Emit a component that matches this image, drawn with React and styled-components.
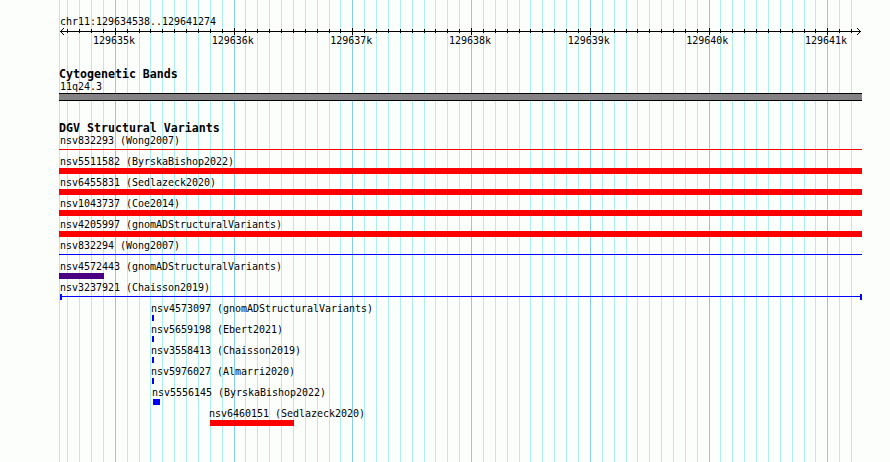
import React from "react";
import styled, { createGlobalStyle } from "styled-components";

const WIDTH = 890;
const HEIGHT = 462;
const LEFT = 59;

const colors = {
  paper: "#fcfefc",
  minor: "#afeeee",
  major: "#87ceeb",
  loss: "#ff0000",
  gain: "#0000ff",
  complex: "#4b0082",
  band: "#848284"
};

const majorTicks = [115, 234, 352, 471, 590, 709, 827];
const minorTicks = [
  67, 79, 91, 103,
  127, 139, 150, 162, 174, 186, 198, 210, 222,
  245, 257, 269, 281, 293, 305, 317, 329, 340,
  364, 376, 388, 400, 412, 424, 435, 447, 459,
  483, 495, 507, 519, 530, 542, 554, 566, 578,
  602, 614, 626, 637, 649, 661, 673, 685, 697,
  720, 732, 744, 756, 768, 780, 792, 804, 815,
  839, 851
];
const tickLabels = ["129635k", "129636k", "129637k", "129638k", "129639k", "129640k", "129641k"];

const variants = [
  { name: "nsv832293 (Wong2007)", type: "line", color: colors.loss },
  { name: "nsv5511582 (ByrskaBishop2022)", type: "bar", color: colors.loss },
  { name: "nsv6455831 (Sedlazeck2020)", type: "bar", color: colors.loss },
  { name: "nsv1043737 (Coe2014)", type: "bar", color: colors.loss },
  { name: "nsv4205997 (gnomADStructuralVariants)", type: "bar", color: colors.loss },
  { name: "nsv832294 (Wong2007)", type: "line", color: colors.gain },
  { name: "nsv4572443 (gnomADStructuralVariants)", type: "bar", color: colors.complex, width: 45 },
  { name: "nsv3237921 (Chaisson2019)", type: "span", color: colors.gain },
  { name: "nsv4573097 (gnomADStructuralVariants)", type: "bar", color: colors.gain, start: 93, width: 2, label: 92 },
  { name: "nsv5659198 (Ebert2021)", type: "bar", color: colors.gain, start: 93, width: 2, label: 92 },
  { name: "nsv3558413 (Chaisson2019)", type: "bar", color: colors.gain, start: 93, width: 2, label: 92 },
  { name: "nsv5976027 (Almarri2020)", type: "bar", color: colors.gain, start: 93, width: 2, label: 92 },
  { name: "nsv5556145 (ByrskaBishop2022)", type: "bar", color: colors.gain, start: 94, width: 7, label: 93 },
  { name: "nsv6460151 (Sedlazeck2020)", type: "bar", color: colors.loss, start: 151, width: 84, label: 150 }
];

const GlobalStyle = createGlobalStyle`
  body {
    margin: 0;
    background: ${colors.paper};
  }
`;

const Page = styled.div`
  position: relative;
  box-sizing: border-box;
  width: ${WIDTH}px;
  height: ${HEIGHT}px;
  padding: 15px 28px 0 ${LEFT}px;
  overflow: hidden;
  background: ${colors.paper};
  color: #000;
  font-family: "DejaVu Sans Mono", monospace;
`;

const GridLines = styled.svg`
  position: absolute;
  top: 0;
  left: 0;
`;

const Content = styled.div`
  position: relative;
  display: flex;
  flex-direction: column;
`;

const Label = styled.div`
  height: 12px;
  line-height: 14px;
  font-size: 10px;
  letter-spacing: -0.02px;
  white-space: pre;
  margin-left: ${({ $start = 1 }) => $start}px;
  transform: scaleY(1.1);
  transform-origin: 0 11px;
`;

const Axis = styled.svg`
  display: block;
  height: 7px;
  width: 803px;
  margin-top: 1px;
`;

const TickLabels = styled.div`
  display: flex;
  justify-content: space-between;
  width: 754px;
  margin-left: 34px;
  margin-top: -1px;
`;

const TickLabel = styled(Label)`
  margin-left: 0;
`;

const Track = styled.section`
  display: flex;
  flex-direction: column;
  margin-top: ${({ $gap }) => $gap}px;
`;

const Title = styled.h2`
  margin: 0;
  height: 12px;
  line-height: 12px;
  font-size: 11.627px;
  font-weight: bold;
  white-space: pre;
`;

const Band = styled.div`
  box-sizing: border-box;
  height: 8px;
  margin-top: 1px;
  background: ${colors.band};
  border-top: 1px solid #000;
  border-bottom: 1px solid #000;
`;

const Row = styled.div`
  height: 21px;
`;

const Bar = styled.div`
  width: ${({ $width }) => ($width ? `${$width}px` : "100%")};
  height: 6px;
  margin-top: 1px;
  margin-left: ${({ $start = 0 }) => $start}px;
  background: ${({ $color }) => $color};
`;

const Line = styled.div`
  height: 1px;
  margin-top: 3px;
  background: ${({ $color }) => $color};
`;

const Span = styled.div`
  display: flex;
  height: 6px;
  margin-top: 1px;
  margin-left: 1px;
`;

const SpanLine = styled(Line)`
  flex: 1;
  margin-top: 2px;
`;

const Cap = styled.div`
  width: 2px;
  background: ${colors.gain};
`;

const Grid = () => (
  <GridLines width={WIDTH} height={HEIGHT} shapeRendering="crispEdges">
    {[LEFT, ...minorTicks].map(x => <rect key={x} x={x} width="1" height={HEIGHT} fill={colors.minor} />)}
    {majorTicks.map(x => <rect key={x} x={x} width="1" height={HEIGHT} fill={colors.major} />)}
  </GridLines>
);

const Ruler = () => (
  <>
    <Axis viewBox="59 28 803 7" shapeRendering="crispEdges">
      <rect x="60" y="31" width="801" height="1" />
      {minorTicks.map(x => <rect key={x} x={x} y="29" width="1" height="4" />)}
      {majorTicks.map(x => <rect key={x} x={x} y="28" width="1" height="7" />)}
      {[1, 2, 3].map(n => (
        <React.Fragment key={n}>
          <rect x={60 + n} y={31 - n} width="1" height="1" />
          <rect x={60 + n} y={31 + n} width="1" height="1" />
          <rect x={860 - n} y={31 - n} width="1" height="1" />
          <rect x={860 - n} y={31 + n} width="1" height="1" />
        </React.Fragment>
      ))}
    </Axis>
    <TickLabels>
      {tickLabels.map(text => <TickLabel key={text}>{text}</TickLabel>)}
    </TickLabels>
  </>
);

const Glyph = ({ type, color, start, width }) => {
  if (type === "line") return <Line $color={color} />;
  if (type === "span") {
    return (
      <Span>
        <Cap />
        <SpanLine $color={color} />
        <Cap />
      </Span>
    );
  }
  return <Bar $color={color} $start={start} $width={width} />;
};

const App = () => (
  <Page>
    <GlobalStyle />
    <Grid />
    <Content>
      <Label>chr11:129634538..129641274</Label>
      <Ruler />
      <Track $gap={22}>
        <Title>Cytogenetic Bands</Title>
        <Label>11q24.3</Label>
        <Band />
      </Track>
      <Track $gap={21}>
        <Title>DGV Structural Variants</Title>
        {variants.map(({ name, label, ...glyph }) => (
          <Row key={name}>
            <Label $start={label}>{name}</Label>
            <Glyph {...glyph} />
          </Row>
        ))}
      </Track>
    </Content>
  </Page>
);

export default App;
